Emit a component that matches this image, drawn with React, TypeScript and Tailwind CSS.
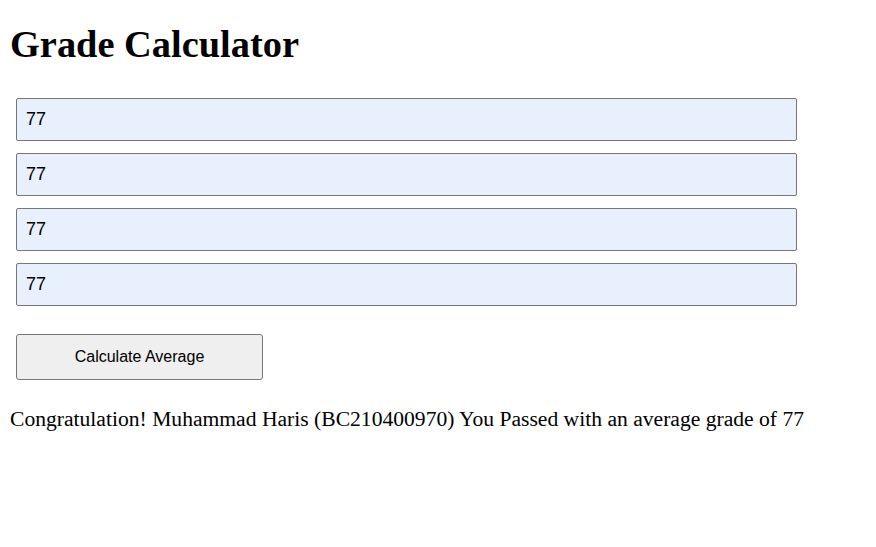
import { useState } from 'react';

export default function App() {
  const [grades, setGrades] = useState(['77', '77', '77', '77']);
  const avg = grades.reduce((s, g) => s + Number(g || 0), 0) / grades.length;

  return (
    <div className="min-h-screen bg-white px-[10px] pt-[21px] text-black">
      <h1 className="font-['Liberation_Serif',serif] text-[38.4px] font-bold leading-[46px]">Grade Calculator</h1>

      <div className="mt-[31px] flex flex-col gap-[12px] pl-[6px]">
        {grades.map((g, i) => (
          <input
            key={i}
            value={g}
            onChange={(e) => setGrades(grades.map((x, j) => (j === i ? e.target.value : x)))}
            className="h-[43px] w-[781px] rounded-[2px] border border-[#767676] bg-[#e8f0fe] px-[9px] font-['Liberation_Sans',sans-serif] text-[18px] text-black outline-none"
          />
        ))}
      </div>

      <div className="mt-[28px] pl-[6px]">
        <button className="h-[46px] w-[247px] rounded-[3px] border border-[#767676] bg-[#efefef] font-['Liberation_Sans',sans-serif] text-[16px] text-black">
          Calculate Average
        </button>
      </div>

      <p className="mt-[26px] font-['Liberation_Serif',serif] text-[21.6px] leading-[26px]">
        Congratulation! Muhammad Haris (BC210400970) You Passed with an average grade of {avg}
      </p>
    </div>
  );
}
